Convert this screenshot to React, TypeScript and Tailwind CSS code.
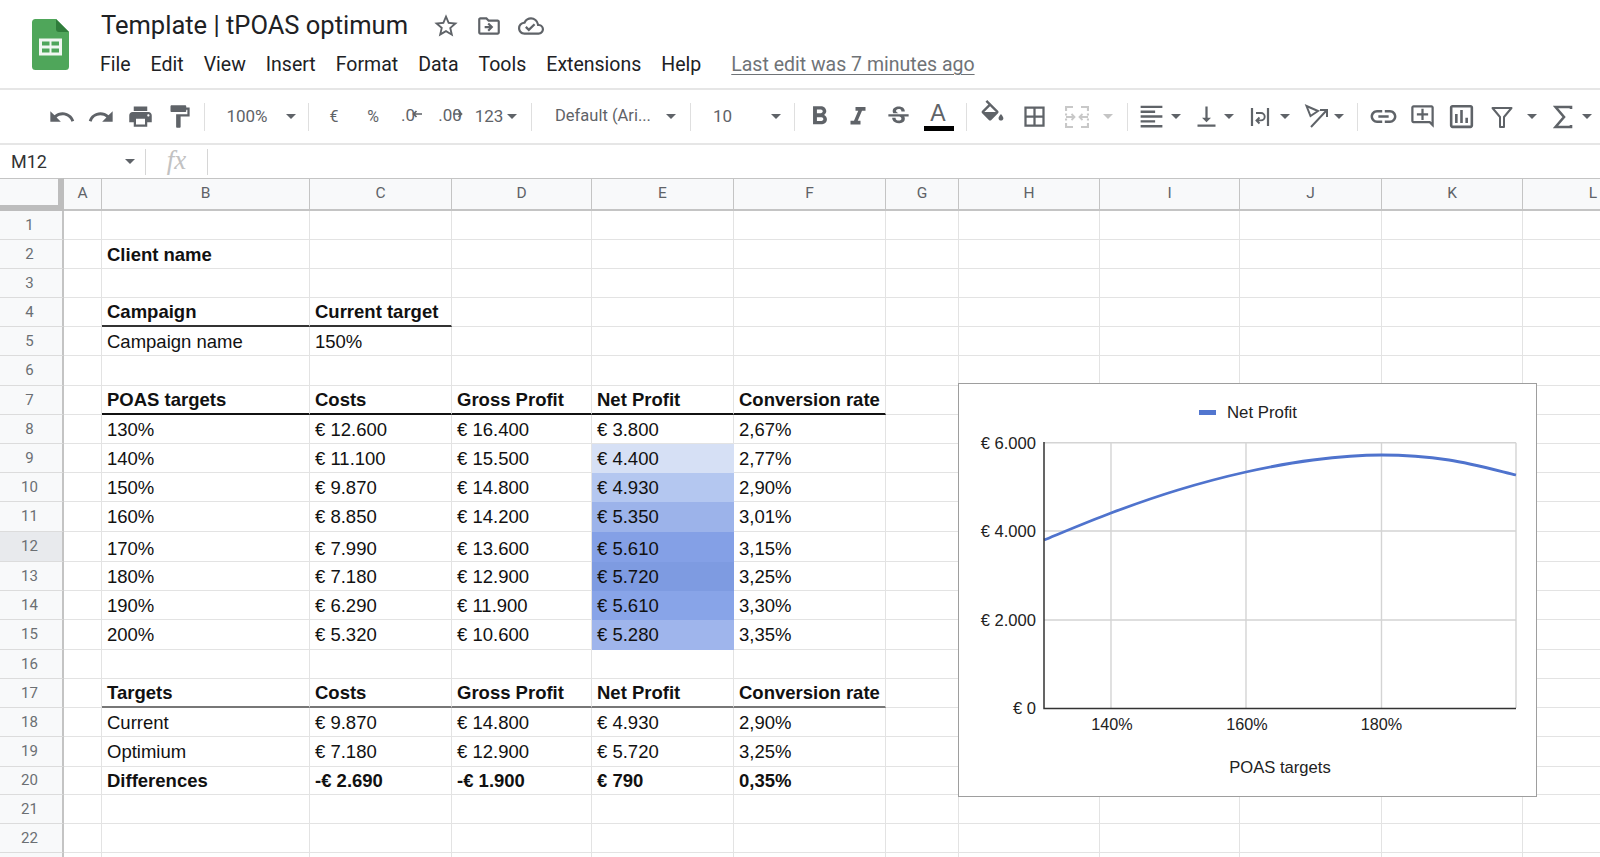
import React from "react";
import {
  MdUndo, MdRedo, MdPrint, MdFormatPaint, MdFormatBold, MdFormatItalic, MdStrikethroughS,
  MdBorderAll, MdFormatAlignLeft, MdVerticalAlignBottom, MdLink, MdOutlineAddComment,
  MdStarBorder, MdOutlineDriveFileMove, MdOutlineCloudDone, MdOutlineInsertChart,
} from "react-icons/md";

const GREY = "#5f6368";

function Box({ className = "", children }: { className?: string; children?: React.ReactNode }) {
  return <div className={"shrink-0 flex items-center justify-center text-[#5f6368] " + className}>{children}</div>;
}

function Caret({ className = "", light = false }: { className?: string; light?: boolean }) {
  return (
    <Box className={"w-[10px] " + className}>
      <svg width="10" height="5" viewBox="0 0 10 5" className="shrink-0">
        <path d="M0 0h10L5 5z" fill={light ? "#c4c4c4" : GREY} />
      </svg>
    </Box>
  );
}

function Sep({ className = "" }: { className?: string }) {
  return <div className={"w-px h-[28px] bg-[#dfdfdf] shrink-0 " + className} />;
}

function SmallArrow({ left }: { left: boolean }) {
  return (
    <svg width="10" height="8" viewBox="0 0 10 8" className="absolute">
      <path d={left ? "M10 4H2M4.5 1L1.5 4l3 3" : "M0 4h8M5.5 1l3 3-3 3"} fill="none" stroke={GREY} strokeWidth="1.7" />
    </svg>
  );
}

function Logo() {
  return (
    <svg width="37" height="51" viewBox="0 0 37 51" className="shrink-0">
      <path d="M3.5 0H24l13 13v34.5a3.5 3.5 0 0 1-3.5 3.5h-30A3.5 3.5 0 0 1 0 47.5v-44A3.5 3.5 0 0 1 3.5 0z" fill="#4fa65a" />
      <path d="M24 0l13 13H27a3 3 0 0 1-3-3z" fill="#2f7d3b" />
      <path d="M7 19.5h23v17H7z" fill="#f1f7f1" />
      <path d="M10 22.5h7.5v4H10zM19.5 22.5H27v4h-7.5zM10 29.5h7.5v4H10zM19.5 29.5H27v4h-7.5z" fill="#4fa65a" />
    </svg>
  );
}

function Toolbar() {
  const icon = 27;
  return (
    <div className="h-[55px] border-b-2 border-[#e6e6e6] flex items-center pl-[42px] overflow-hidden [font-family:Roboto,sans-serif]">
      <Box className="w-[39px]"><MdUndo size={28} /></Box>
      <Box className="w-[39px]"><MdRedo size={28} /></Box>
      <Box className="w-[40px]"><MdPrint size={icon} /></Box>
      <Box className="w-[39px]"><MdFormatPaint size={icon} /></Box>
      <Sep className="ml-[5px]" />
      <Box className="w-[78px] ml-[3px] text-[17px]">100%</Box>
      <Caret />
      <Sep className="ml-[12px]" />
      <Box className="w-[50px] text-[16px]">€</Box>
      <Box className="w-[28px] text-[16px]">%</Box>
      <Box className="w-[42px] text-[17px] relative">
        <span className="-translate-y-px">.0</span>
        <div className="absolute left-[25px] top-[6px]"><SmallArrow left /></div>
      </Box>
      <Box className="w-[42px] text-[17px] relative">
        <span className="-translate-y-px">.00</span>
        <div className="absolute left-[24px] top-[6px]"><SmallArrow left={false} /></div>
      </Box>
      <Box className="w-[36px] text-[17px]">123</Box>
      <Caret />
      <Sep className="ml-[14px]" />
      <Box className="w-[104px] ml-[23px] text-[16.5px] justify-start whitespace-nowrap">Default (Ari...</Box>
      <Caret className="ml-[7px]" />
      <Sep className="ml-[14px]" />
      <Box className="w-[58px] ml-[22px] text-[17px] justify-start">10</Box>
      <Caret />
      <Sep className="ml-[13px]" />
      <Box className="w-[48px]"><MdFormatBold size={31} /></Box>
      <Box className="w-[30px]"><MdFormatItalic size={30} /></Box>
      <Box className="w-[50px]"><MdStrikethroughS size={27} /></Box>
      <Box className="w-[30px] relative">
        <span className="text-[23px] leading-none -translate-y-[3px] [font-family:'Liberation_Sans',sans-serif]">A</span>
        <div className="absolute left-[1px] top-[21px] w-[30px] h-[5px] bg-black" />
      </Box>
      <Sep className="ml-[13px]" />
      <Box className="w-[50px]">
        <svg width="29" height="29" viewBox="0 0 24 24" className="-translate-y-[2px]">
          <path fillRule="evenodd" fill={GREY} d="M16.56 8.94L7.62 0 6.21 1.41l2.38 2.38-5.15 5.15c-.59.59-.59 1.54 0 2.12l5.5 5.5c.29.29.68.44 1.06.44s.77-.15 1.06-.44l5.5-5.5c.59-.58.59-1.53 0-2.12zM5.21 10L10 5.21 14.79 10H5.21zM19 11.5s-2 2.17-2 3.5c0 1.1.9 2 2 2s2-.9 2-2c0-1.33-2-3.5-2-3.5z" />
        </svg>
      </Box>
      <Box className="w-[34px]"><MdBorderAll size={27} /></Box>
      <Box className="w-[52px]">
        <svg width="24" height="22" viewBox="0 0 24 22" fill="none" stroke="#c8c8c8" strokeWidth="2.2">
          <path d="M1 5V1h7M16 1h7v4M1 8v0M1 14v0M23 8v0M23 14v0M1 17v4h7M16 21h7v-4" />
          <path d="M1 11h8M6.5 8l3 3-3 3M23 11h-8M17.5 8l-3 3 3 3" strokeWidth="1.8" />
          <path d="M1 7.5v2M1 12.5v2M23 7.5v2M23 12.5v2" />
        </svg>
      </Box>
      <Caret light />
      <Sep className="ml-[14px]" />
      <Box className="w-[40px] ml-[3px]"><MdFormatAlignLeft size={29} /></Box>
      <Caret />
      <Box className="w-[36px] ml-[7px]"><MdVerticalAlignBottom size={27} /></Box>
      <Caret />
      <Box className="w-[36px] ml-[8px]">
        <svg width="24" height="24" viewBox="0 0 24 24" fill="none" stroke={GREY}>
          <path d="M4 3v18M20 3v18" strokeWidth="2.2" />
          <path d="M8 8h5a3.6 3.6 0 0 1 0 7.4H9M11.5 12.5l-3 3 3 3" strokeWidth="1.9" />
        </svg>
      </Box>
      <Caret className="ml-[2px]" />
      <Box className="w-[36px] ml-[8px]">
        <svg width="27" height="27" viewBox="0 0 27 27" fill="none" stroke={GREY} strokeWidth="2">
          <path d="M3.5 3l11.5 5-7.5 5z" />
          <path d="M8 24L23 8M17 7h7v7" />
        </svg>
      </Box>
      <Caret />
      <Sep className="ml-[13px]" />
      <Box className="w-[50px]"><MdLink size={31} /></Box>
      <Box className="w-[28px]"><MdOutlineAddComment size={27} /></Box>
      <Box className="w-[50px]"><MdOutlineInsertChart size={31} /></Box>
      <Box className="w-[32px]">
        <svg width="22" height="22" viewBox="0 0 22 22" fill="none" stroke={GREY} strokeWidth="2">
          <path d="M1.5 2h19L13 11v10h-4V11z" strokeLinejoin="round" />
        </svg>
      </Box>
      <Caret className="ml-[9px]" />
      <Box className="w-[36px] ml-[8px]">
        <svg width="20" height="24" viewBox="0 0 20 24" fill="none" stroke={GREY} strokeWidth="2.6">
          <path d="M18 4V2H2.5L11 12 2.5 22H18v-2" />
        </svg>
      </Box>
      <Caret className="ml-[1px]" />
    </div>
  );
}

const COLS = ["", "A", "B", "C", "D", "E", "F", "G", "H", "I", "J", "K", "L"];

const DATA: Record<number, string[]> = {
  2: ["Client name"],
  4: ["Campaign", "Current target"],
  5: ["Campaign name", "150%"],
  7: ["POAS targets", "Costs", "Gross Profit", "Net Profit", "Conversion rate"],
  8: ["130%", "€ 12.600", "€ 16.400", "€ 3.800", "2,67%"],
  9: ["140%", "€ 11.100", "€ 15.500", "€ 4.400", "2,77%"],
  10: ["150%", "€ 9.870", "€ 14.800", "€ 4.930", "2,90%"],
  11: ["160%", "€ 8.850", "€ 14.200", "€ 5.350", "3,01%"],
  12: ["170%", "€ 7.990", "€ 13.600", "€ 5.610", "3,15%"],
  13: ["180%", "€ 7.180", "€ 12.900", "€ 5.720", "3,25%"],
  14: ["190%", "€ 6.290", "€ 11.900", "€ 5.610", "3,30%"],
  15: ["200%", "€ 5.320", "€ 10.600", "€ 5.280", "3,35%"],
  17: ["Targets", "Costs", "Gross Profit", "Net Profit", "Conversion rate"],
  18: ["Current", "€ 9.870", "€ 14.800", "€ 4.930", "2,90%"],
  19: ["Optimium", "€ 7.180", "€ 12.900", "€ 5.720", "3,25%"],
  20: ["Differences", "-€ 2.690", "-€ 1.900", "€ 790", "0,35%"],
};

const BOLD = [2, 4, 7, 17, 20];

const FILL: Record<number, string> = {
  9: "bg-[#d6e0f5] border-b-[#d6e0f5] border-r-[#d6e0f5]",
  10: "bg-[#b4c7f0] border-b-[#b4c7f0] border-r-[#b4c7f0]",
  11: "bg-[#9cb3ea] border-b-[#9cb3ea] border-r-[#9cb3ea]",
  12: "bg-[#84a0e6] border-b-[#84a0e6] border-r-[#84a0e6]",
  13: "bg-[#7e9be1] border-b-[#7e9be1] border-r-[#7e9be1]",
  14: "bg-[#88a4e8] border-b-[#88a4e8] border-r-[#88a4e8]",
  15: "bg-[#9fb5ec] border-b-[#9fb5ec] border-r-[#9fb5ec]",
};

function cellClass(r: number, c: number) {
  // c: 0 = column A, 1 = B ...
  let cls = "border-r border-b border-[#e3e3e3] flex items-center px-[5px] overflow-visible whitespace-nowrap text-[18.5px] text-[#111] leading-none pt-[2px]";
  if (r === 12) cls += " pt-[5px]";
  if (BOLD.includes(r) && c >= 1) cls += " font-bold";
  if (r === 4 && (c === 1 || c === 2)) cls += " border-b-2 border-b-[#333]";
  if (r === 7 && c >= 1 && c <= 5) cls += " border-b-2 border-b-[#111]";
  if (r === 17 && c >= 1 && c <= 5) cls += " border-b-2 border-b-[#777]";
  if (c === 4 && FILL[r]) cls += " " + FILL[r];
  return cls;
}

function Sheet() {
  const rows = Array.from({ length: 23 }, (_, i) => i + 1);
  const dataCols = COLS.slice(1);
  return (
    <>
      <div className="border-r-[6px] border-b-[6px] border-[#bdbdbd] border-t border-t-[#c4c4c4] bg-[#f8f9fa]" />
      {dataCols.map((c) => (
        <div key={c} className="bg-[#f8f9fa] border-t border-t-[#c4c4c4] border-r border-b-2 border-[#c4c4c4] flex items-center justify-center text-[15.5px] text-[#5f6368] [font-family:Roboto,sans-serif]">
          {c}
        </div>
      ))}
      {rows.map((r) => (
        <React.Fragment key={r}>
          <div className={(r === 12 ? "bg-[#e8eaed]" : "bg-[#f8f9fa]") + " border-r-2 border-r-[#c4c4c4] border-b border-b-[#dcdcdc] flex items-center justify-center pr-[3px] text-[15px] text-[#6b6f73] [font-family:Roboto,sans-serif] overflow-hidden"}>
            {r <= 22 ? r : ""}
          </div>
          {dataCols.map((_, c) => (
            <div key={c} className={cellClass(r, c)}>
              {c >= 1 && DATA[r] ? DATA[r][c - 1] : null}
            </div>
          ))}
        </React.Fragment>
      ))}
    </>
  );
}

const POINTS: [number, number][] = [
  [1044, 540], [1111, 513], [1178, 490], [1246, 472], [1313, 460], [1381.5, 455], [1449, 460], [1516, 475],
];

function smooth(p: [number, number][]) {
  let d = `M${p[0][0]} ${p[0][1]}`;
  for (let i = 0; i < p.length - 1; i++) {
    const a = p[Math.max(i - 1, 0)], b = p[i], c = p[i + 1], e = p[Math.min(i + 2, p.length - 1)];
    d += `C${b[0] + (c[0] - a[0]) / 6} ${b[1] + (c[1] - a[1]) / 6} ${c[0] - (e[0] - b[0]) / 6} ${c[1] - (e[1] - b[1]) / 6} ${c[0]} ${c[1]}`;
  }
  return d;
}

function Chart() {
  const txt = "#222";
  const yLabels: [string, number][] = [["€ 6.000", 442.5], ["€ 4.000", 531], ["€ 2.000", 620], ["€ 0", 708]];
  const xLabels: [string, number][] = [["140%", 1112], ["160%", 1247], ["180%", 1381.5]];
  return (
    <div className="absolute left-[958px] top-[205px] w-[579px] h-[414px] bg-white border border-[#9e9e9e]">
      <svg width="577" height="412" viewBox="959 384 577 412" className="block [font-family:'Liberation_Sans',sans-serif]">
        <rect x="1199" y="410" width="17" height="5" fill="#5276cf" />
        <text x="1227" y="418" fontSize="16.8" fill={txt}>Net Profit</text>
        <g stroke="#d4d4d4" strokeWidth="1.4">
          <path d="M1044 442.7H1516M1044 531H1516M1044 620H1516" />
          <path d="M1111 442.7V708M1246 442.7V708M1381.5 442.7V708M1516 442.7V708" />
        </g>
        <path d={smooth(POINTS)} fill="none" stroke="#4f73cd" strokeWidth="2.8" />
        <path d="M1044 442V708.5H1516" fill="none" stroke="#333" strokeWidth="1.5" />
        {yLabels.map(([t, y]) => (
          <text key={t} x="1036" y={y + 6} textAnchor="end" fontSize="16.6" fill={txt}>{t}</text>
        ))}
        {xLabels.map(([t, x]) => (
          <text key={t} x={x} y="730" textAnchor="middle" fontSize="16.2" fill={txt}>{t}</text>
        ))}
        <text x="1280" y="773" textAnchor="middle" fontSize="16.6" fill={txt}>POAS targets</text>
      </svg>
    </div>
  );
}

export default function App() {
  const menu = ["File", "Edit", "View", "Insert", "Format", "Data", "Tools", "Extensions", "Help"];
  return (
    <div className="w-[1600px] h-[857px] overflow-hidden bg-white relative [font-family:'Liberation_Sans',sans-serif]">
      <header className="h-[90px] border-b-2 border-[#e6e6e6] flex pl-[32px] pt-[19px] [font-family:Roboto,sans-serif]">
        <Logo />
        <div className="ml-[32px] -mt-[4px]">
          <div className="flex items-center h-[24px] mt-[-1px]">
            <h1 className="text-[25.5px] font-normal leading-none text-[#202124] whitespace-nowrap w-[331px]">Template | tPOAS optimum</h1>
            <MdStarBorder size={28} className="text-[#5f6368] shrink-0" />
            <MdOutlineDriveFileMove size={26} className="text-[#5f6368] shrink-0 ml-[16px]" />
            <MdOutlineCloudDone size={26} className="text-[#5f6368] shrink-0 ml-[16px]" />
          </div>
          <nav className="flex items-center gap-[20px] mt-[14px] h-[26px] text-[19.5px] text-[#202124] whitespace-nowrap -ml-px">
            {menu.map((m) => <span key={m}>{m}</span>)}
            <span className="ml-[10px] text-[#6f7377] underline underline-offset-[3px]">Last edit was 7 minutes ago</span>
          </nav>
        </div>
      </header>
      <Toolbar />
      <div className="h-[33px] flex items-center [font-family:Roboto,sans-serif] text-[#333]">
        <div className="w-[122px] pl-[11px] text-[18px] shrink-0">M12</div>
        <Caret className="ml-[3px]" />
        <div className="w-px h-[26px] bg-[#d6d6d6] ml-[10px]" />
        <div className="w-[61px] text-center text-[27px] leading-none italic text-[#c2c2c2] [font-family:'Liberation_Serif',serif] -translate-y-px">fx</div>
        <div className="w-px h-[26px] bg-[#d6d6d6]" />
      </div>
      <div className="relative">
        <div className="grid grid-cols-[64px_38px_208px_142px_140px_142px_152px_73px_141px_140px_142px_141px_141px] grid-rows-[33px_29px_29px_29px_29px_29px_30px_29px_29px_29px_29px_30px_30px_29px_29px_30px_29px_29px_29px_30px_28px_29px_29px_29px]">
          <Sheet />
        </div>
        <Chart />
      </div>
    </div>
  );
}
